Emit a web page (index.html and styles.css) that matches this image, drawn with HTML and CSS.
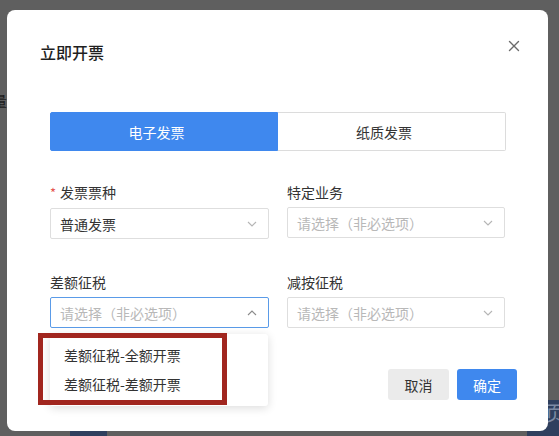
FILE: index.html
```html
<!DOCTYPE html>
<html lang="zh-CN">
<head>
<meta charset="utf-8">
<title>立即开票</title>
<link rel="stylesheet" href="styles.css">
</head>
<body>
<div class="page">
  <span class="bg-glyph">量</span>
  <div class="bg-block bg-block-left"></div>
  <div class="bg-block bg-block-right"><span>页</span></div>

  <div class="modal">
    <div class="modal-header">
      <h1 class="modal-title">立即开票</h1>
      <button class="close" aria-label="关闭">
        <svg width="12" height="12" viewBox="0 0 12 12"><path d="M1.5 1.5 L10.5 10.5 M10.5 1.5 L1.5 10.5" stroke="#6b6b6b" stroke-width="1.4" fill="none" stroke-linecap="round"/></svg>
      </button>
    </div>

    <div class="modal-body">
      <div class="tabs">
        <div class="tab active">电子发票</div>
        <div class="tab">纸质发票</div>
      </div>

      <div class="form-grid">
        <div class="field">
          <label class="label"><span class="req">*</span>发票票种</label>
          <div class="select">
            <span class="value">普通发票</span>
            <svg class="chev" width="10" height="6" viewBox="0 0 10 6"><path d="M1 1 L5 5 L9 1" stroke="#b5b5b5" stroke-width="1.1" fill="none"/></svg>
          </div>
        </div>
        <div class="field">
          <label class="label">特定业务</label>
          <div class="select">
            <span class="placeholder">请选择（非必选项）</span>
            <svg class="chev" width="10" height="6" viewBox="0 0 10 6"><path d="M1 1 L5 5 L9 1" stroke="#b5b5b5" stroke-width="1.1" fill="none"/></svg>
          </div>
        </div>
        <div class="field field-open">
          <label class="label">差额征税</label>
          <div class="select focused">
            <span class="placeholder">请选择（非必选项）</span>
            <svg class="chev" width="10" height="6" viewBox="0 0 10 6"><path d="M1 5 L5 1 L9 5" stroke="#8a8a8a" stroke-width="1.1" fill="none"/></svg>
          </div>
          <div class="dropdown">
            <div class="option">差额征税-全额开票</div>
            <div class="option">差额征税-差额开票</div>
            <div class="annotation"></div>
          </div>
        </div>
        <div class="field">
          <label class="label">减按征税</label>
          <div class="select">
            <span class="placeholder">请选择（非必选项）</span>
            <svg class="chev" width="10" height="6" viewBox="0 0 10 6"><path d="M1 1 L5 5 L9 1" stroke="#b5b5b5" stroke-width="1.1" fill="none"/></svg>
          </div>
        </div>
      </div>
    </div>

    <div class="modal-footer">
      <button class="btn btn-cancel">取消</button>
      <button class="btn btn-ok">确定</button>
    </div>
  </div>
</div>
</body>
</html>
```

FILE: styles.css
```css
* { box-sizing: border-box; }

html, body {
  margin: 0;
  padding: 0;
  width: 559px;
  height: 436px;
  overflow: hidden;
  background: #5f5f5f;
  font-family: "Noto Sans CJK SC", "Noto Sans", sans-serif;
}

.page {
  position: relative;
  width: 559px;
  height: 436px;
  padding: 10px 0 0 7px;
}

.bg-glyph {
  position: absolute;
  left: -8px;
  top: 91px;
  font-size: 15px;
  line-height: 20px;
  color: #1c1c1c;
}

.bg-block {
  position: absolute;
  background: #2f3f5e;
}
.bg-block-left {
  left: 70px;
  top: 428px;
  width: 37px;
  height: 8px;
}
.bg-block-right {
  left: 527px;
  top: 400px;
  width: 32px;
  height: 36px;
  overflow: hidden;
}
.bg-block-right span {
  position: absolute;
  left: 18px;
  top: 1px;
  font-size: 20px;
  line-height: 24px;
  color: #7d8aa3;
}

.modal {
  position: relative;
  width: 541px;
  background: #fff;
  border-radius: 8px;
  padding-bottom: 31px;
}

.modal-header {
  display: flex;
  justify-content: space-between;
  align-items: flex-start;
  padding: 30px 28px 0 33px;
}

.modal-title {
  margin: 0;
  font-size: 16px;
  line-height: 24px;
  font-weight: 500;
  color: #1f1f1f;
}

.close {
  border: 0;
  background: none;
  padding: 0;
  width: 12px;
  height: 12px;
  margin-top: 0;
  display: flex;
}

.modal-body {
  padding: 48px 42px 0 43px;
}

.tabs {
  display: flex;
  height: 39px;
}
.tab {
  flex: 1;
  display: flex;
  align-items: center;
  justify-content: center;
  padding-right: 15px;
  font-size: 14px;
  color: #333;
  border: 1px solid #dcdcdc;
  background: #fff;
}
.tab.active {
  flex: 0 0 228px;
  background: #3f88ee;
  border-color: #3f88ee;
  color: #fff;
  border-radius: 2px 0 0 2px;
}
.tab:last-child {
  border-left: 0;
  border-radius: 0 2px 2px 0;
}

.form-grid {
  margin-top: 31px;
  display: grid;
  grid-template-columns: 219px 218px;
  column-gap: 18px;
  row-gap: 33px;
}

.field {
  display: flex;
  flex-direction: column;
  gap: 5px;
}
.field-open {
  position: relative;
}

.label {
  font-size: 14px;
  line-height: 20px;
  color: #333;
}
.req {
  color: #e5554f;
  margin-right: 4px;
  font-size: 13px;
}

.select {
  height: 31px;
  border: 1px solid #dedede;
  border-radius: 2px;
  display: flex;
  align-items: center;
  justify-content: space-between;
  padding: 0 11px 0 9px;
  font-size: 14px;
  background: #fff;
}
.select.focused {
  border-color: #5a9be8;
}
.value { color: #333; }
.placeholder { color: #b8b8b8; }

.dropdown {
  position: absolute;
  left: 0;
  top: calc(100% + 6px);
  width: 218px;
  padding: 7px 0;
  background: #fff;
  border-radius: 3px;
  box-shadow: 0 2px 10px rgba(0, 0, 0, 0.14);
  z-index: 2;
}
.option {
  height: 29px;
  line-height: 29px;
  padding-left: 14px;
  font-size: 14px;
  color: #333;
}
.annotation {
  position: absolute;
  left: -12px;
  top: -1px;
  width: 189px;
  height: 72px;
  border: 5px solid #a1261f;
}

.modal-footer {
  margin-top: 41px;
  display: flex;
  justify-content: flex-end;
  gap: 8px;
  padding-right: 31px;
}

.btn {
  height: 31px;
  border: 0;
  border-radius: 3px;
  font-family: inherit;
  font-size: 14px;
  padding: 0;
}
.btn-cancel {
  width: 61px;
  background: #ebebeb;
  color: #333;
}
.btn-ok {
  width: 60px;
  background: #3f88ee;
  color: #fff;
}
```
